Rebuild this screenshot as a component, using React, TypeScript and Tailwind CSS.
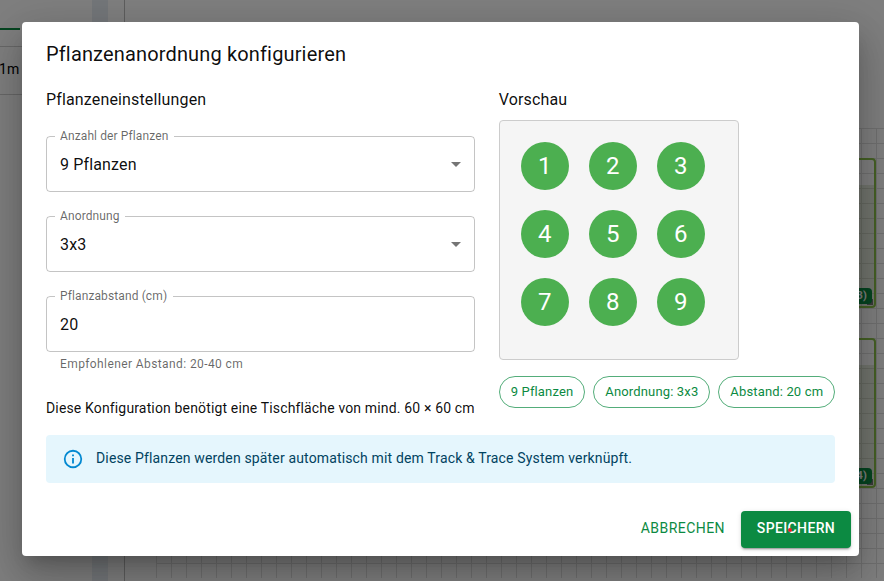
import type { ReactNode } from "react";

function Label({ children }: { children: ReactNode }) {
  return (
    <span className="absolute left-0 top-0 origin-top-left translate-x-[14px] -translate-y-[9px] scale-75 whitespace-nowrap text-[16px] leading-[23px] text-black/60">
      {children}
    </span>
  );
}

function Field({ label, value, select = false }: { label: string; value: string; select?: boolean }) {
  return (
    <div className="relative flex h-14 items-center justify-between pl-[14px] pr-[7px]">
      <Label>{label}</Label>
      <span className="text-[16px] leading-[23px] text-black/95">{value}</span>
      {select && (
        <svg viewBox="0 0 24 24" className="size-6 fill-black/54">
          <path d="M7 10l5 5 5-5z" />
        </svg>
      )}
      <fieldset className="pointer-events-none absolute inset-x-0 -top-[5px] bottom-0 rounded border border-black/23 px-2">
        <legend aria-hidden="true" className="invisible h-[11px] px-[5px] text-xs leading-[11px]">
          {label}
        </legend>
      </fieldset>
    </div>
  );
}

function Chip({ children }: { children: ReactNode }) {
  return (
    <span className="flex h-8 items-center whitespace-nowrap rounded-2xl border border-[#0c8a42]/70 px-[11px] text-[13px] text-[#0c8a42]">
      {children}
    </span>
  );
}

function Table({ badge, top }: { badge: string; top: string }) {
  return (
    <div className={`absolute right-2 h-[150px] w-[240px] rounded-sm border-2 border-[#8bc34a] pt-[25px] ${top}`}>
      <div className="h-full bg-[#7c9a50]/20" />
      <div className="absolute bottom-px right-px size-[6px] bg-[#777]" />
      <div className="absolute bottom-[2px] right-[2px] h-4 rounded-[4px] bg-[#0c8a42] pl-2 pr-[5px] text-[11px] font-bold leading-4 text-white">
        {badge}
      </div>
    </div>
  );
}

function Page() {
  return (
    <div className="flex h-full w-full bg-white text-black">
      <aside className="w-[92px] shrink-0">
        <div className="h-[28px]" />
        <div className="h-[2px] w-5 bg-[#0c8a42]" />
        <div className="mt-4 h-[49px] border-y border-[#d0d0d0] pt-[12px]">
          <span className="-ml-px block text-[14px] leading-[20px]">1m</span>
        </div>
      </aside>
      <div className="w-4 shrink-0 bg-[#e9eef4]" />
      <main className="ml-4 flex flex-1 flex-col border-l border-[#bdbdbd] pl-[31px] pt-[128px]">
        <div className="h-[450px] bg-[linear-gradient(to_right,#e0e0e0_1px,transparent_1px),linear-gradient(to_bottom,#e0e0e0_1px,transparent_1px)] bg-[size:15px_15px]" />
      </main>
      <Table badge="(3)" top="top-[158px]" />
      <Table badge="(4)" top="top-[338px]" />
    </div>
  );
}

const plants = [1, 2, 3, 4, 5, 6, 7, 8, 9];

export default function App() {
  return (
    <div className="relative h-[581px] w-[884px] overflow-hidden font-[Roboto,sans-serif] tracking-[0.15px]">
      <Page />
      <div className="absolute inset-0 bg-black/50 pl-[22px] pt-[22px]">
        <div className="h-[534px] w-[837px] rounded bg-white text-black/95 shadow-[0_11px_15px_-7px_rgba(0,0,0,0.2),0_24px_38px_3px_rgba(0,0,0,0.14),0_9px_46px_8px_rgba(0,0,0,0.12)]">
          <h2 className="px-6 py-4 text-[20px] font-normal leading-8">Pflanzenanordnung konfigurieren</h2>
          <div className="px-6 pb-5">
            <div className="flex gap-6">
              <section className="w-[429px]">
                <h3 className="mb-[22px] text-[16px] leading-7">Pflanzeneinstellungen</h3>
                <div className="flex flex-col gap-6">
                  <Field label="Anzahl der Pflanzen" value="9 Pflanzen" select />
                  <Field label="Anordnung" value="3x3" select />
                  <Field label="Pflanzabstand (cm)" value="20" />
                </div>
                <p className="mx-[14px] mt-[2px] text-xs leading-[20px] tracking-[0.4px] text-black/60">
                  Empfohlener Abstand: 20-40 cm
                </p>
                <p className="mt-6 whitespace-nowrap text-[14px] leading-[20px]">
                  Diese Konfiguration benötigt eine Tischfläche von mind. 60 × 60 cm
                </p>
              </section>
              <section>
                <h3 className="mb-[6px] text-[16px] leading-7">Vorschau</h3>
                <div className="grid size-60 grid-cols-[repeat(3,48px)] content-start gap-5 rounded border border-[#ccc] bg-[#f5f5f5] p-[21px]">
                  {plants.map((n) => (
                    <div key={n} className="flex size-12 items-center justify-center rounded-full bg-[#4caf50] text-[24px] text-white">
                      {n}
                    </div>
                  ))}
                </div>
                <div className="mt-4 flex gap-2">
                  <Chip>9 Pflanzen</Chip>
                  <Chip>Anordnung: 3x3</Chip>
                  <Chip>Abstand: 20 cm</Chip>
                </div>
              </section>
            </div>
            <div className="mt-[17px] flex h-12 items-center rounded bg-[#e5f6fd] px-4 text-[14px] leading-[20px] text-[#014361]">
              <svg viewBox="0 0 24 24" className="mr-3 size-[22px] fill-[#0288d1]">
                <path d="M11,9H13V7H11M12,20C7.59,20 4,16.41 4,12C4,7.59 7.59,4 12,4C16.41,4 20,7.59 20,12C20,16.41 16.41,20 12,20M12,2A10,10 0 0,0 2,12A10,10 0 0,0 12,22A10,10 0 0,0 22,12A10,10 0 0,0 12,2M11,17H13V11H11V17Z" />
              </svg>
              <span className="pb-[3px]">Diese Pflanzen werden später automatisch mit dem Track &amp; Trace System verknüpft.</span>
            </div>
          </div>
          <div className="flex justify-end gap-2 p-2 text-[14px] font-medium leading-[24px] tracking-[0.4px]">
            <button className="flex h-[37px] rounded px-2 pt-[5px] font-normal tracking-[0.45px] text-[#0c8a42]">ABBRECHEN</button>
            <button className="relative flex h-[37px] w-[110px] justify-center whitespace-nowrap rounded bg-[#0c8a42] pt-[5px] tracking-[0.36px] text-white shadow-[0_3px_1px_-2px_rgba(0,0,0,0.2),0_2px_2px_0_rgba(0,0,0,0.14),0_1px_5px_0_rgba(0,0,0,0.12)]">
              SPEICHERN
              <span className="absolute left-[47px] top-[17px] size-1 rounded-full bg-[#ed1c24]" />
            </button>
          </div>
        </div>
      </div>
    </div>
  );
}
